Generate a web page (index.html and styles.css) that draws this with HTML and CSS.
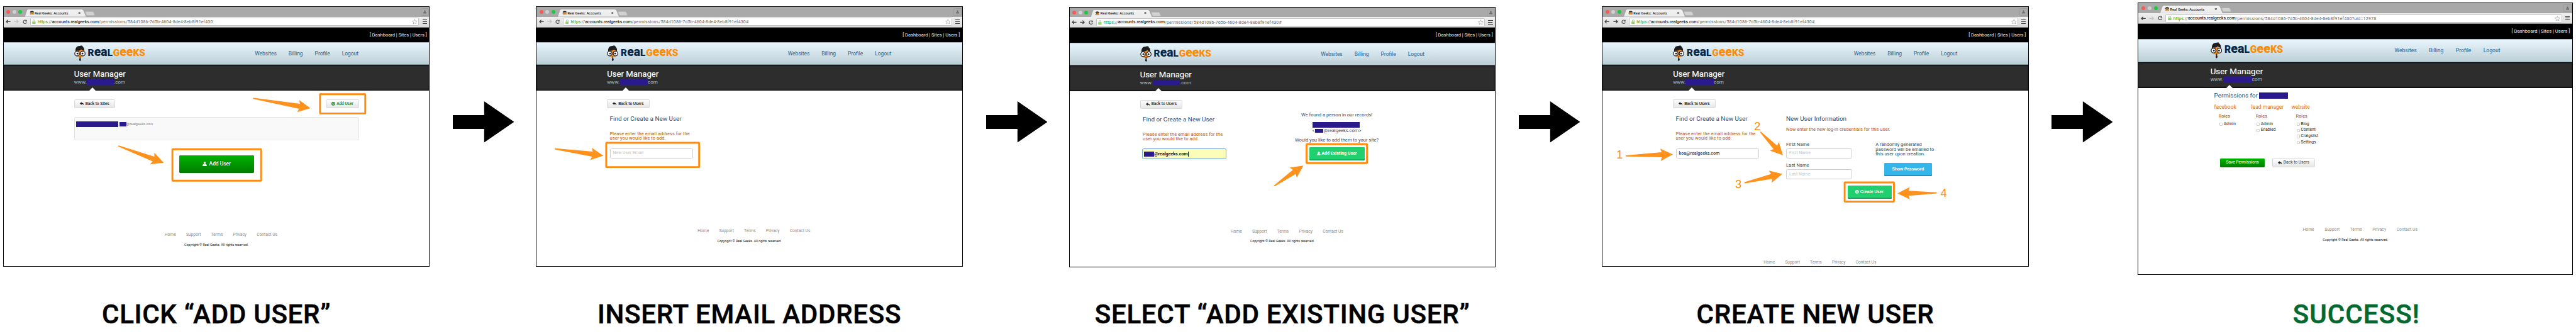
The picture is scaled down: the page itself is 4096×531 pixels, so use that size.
FILE: index.html
```html
<!DOCTYPE html>
<html lang="en">
<head>
<meta charset="utf-8">
<title>User Manager walkthrough</title>
<link rel="stylesheet" href="styles.css">
</head>
<body>
<svg class="sprite" aria-hidden="true">
  <defs>
    <symbol id="geek" viewBox="0 0 25 35">
      <path d="M4 10h17v9c0 4-4 8-8.500 8S4 23 4 19z" fill="#f7901e"/>
      <path d="M3 14C1.500 6 6 1.500 12 1.500c1.500-.5 4-.5 5.500-1l-.7 1.300 2.200-.3-1 1.200c3.500 2 5 6 3.600 11.300l-1.800-3c-2 .3-3-.6-4-1.800-3 2.300-6.500 3.200-10.300 2.300z" fill="#1d1d20"/>
      <path d="M4 14.500q4-2 7 .5M14 15q3-2.500 7-.5" stroke="#1d1d20" stroke-width="1.600" fill="none"/>
      <circle cx="6.200" cy="18" r="5" fill="#fff" stroke="#1d1d20" stroke-width="1.700"/>
      <circle cx="18.800" cy="18" r="5" fill="#fff" stroke="#1d1d20" stroke-width="1.700"/>
      <circle cx="7" cy="18" r="1.900" fill="#1d1d20"/><circle cx="18" cy="18" r="1.900" fill="#1d1d20"/>
      <path d="M11.300 24.500h3l-.8 2 1.500 5.300-2.200 3-2.200-3 1.500-5.300z" fill="#1d1d20"/>
    </symbol>
    <symbol id="favicon" viewBox="0 0 10 9">
      <path d="M1.500 8.500C-.5 7 .8 5.500 2 5.500h6c1.200 0 2.500 1.500.5 3z" fill="#8a9096"/>
      <path d="M2 3h6v3c0 1.500-1.500 2.500-3 2.500S2 7.500 2 6z" fill="#f0962c"/>
      <path d="M.8 4.500C.5 1.500 2.500.3 5 .3s4.600 1 4.200 4.200L7.500 3.200 2.500 3.500z" fill="#222"/>
      <path d="M2.600 5.300h1.800M5.600 5.300h1.800" stroke="#222" stroke-width="1"/>
    </symbol>
    <symbol id="left" viewBox="0 0 11 9"><path d="M10.500 4.500H1.500M5 .8L1.300 4.500 5 8.200" fill="none" stroke="currentColor" stroke-width="1.700"/></symbol>
    <symbol id="right" viewBox="0 0 11 9"><path d="M.5 4.500h9M6 .8l3.700 3.700L6 8.200" fill="none" stroke="currentColor" stroke-width="1.700"/></symbol>
    <symbol id="reload" viewBox="0 0 10 10"><path d="M7.600 2.300A3.700 3.700 0 1 0 8.600 6.300" fill="none" stroke="#4a4a4a" stroke-width="1.600"/><path d="M9.200.5v4H5.300z" fill="#4a4a4a"/></symbol>
    <symbol id="lock" viewBox="0 0 8 10"><path d="M1.800 5V3a2.200 2.200 0 0 1 4.400 0v2" fill="none" stroke="#a9b6a3" stroke-width="1.200"/><rect x=".3" y="4.300" width="7.400" height="5.400" rx=".6" fill="#8fd46a"/></symbol>
    <symbol id="star" viewBox="0 0 12 12"><path d="M6 .9l1.500 3.500 3.800.3-2.900 2.500.9 3.800L6 9l-3.300 2 .9-3.800L.7 4.700l3.800-.3z" fill="#fff" stroke="#8f8f8f" stroke-width=".8"/></symbol>
    <symbol id="person" viewBox="0 0 9 9"><circle cx="4.500" cy="2.400" r="2.300" fill="currentColor"/><path d="M.2 8.900V7.200C.2 5.300 1.800 4.700 3 4.500q1.500.8 3 0c1.200.2 2.800.8 2.800 2.700v1.700z" fill="currentColor"/></symbol>
    <symbol id="reply" viewBox="0 0 9 8"><path d="M3.700 0v2.100C7 2.200 8.900 3.600 8.600 7.600 7.900 5.700 6.600 4.800 3.700 4.800V7L0 3.500z" fill="#222"/></symbol>
    <symbol id="plus" viewBox="0 0 8 8"><circle cx="4" cy="4" r="3.100" fill="none" stroke="currentColor" stroke-width="1.500"/><path d="M4 2.200v3.600M2.200 4h3.600" stroke="currentColor" stroke-width="1"/></symbol>
    <symbol id="next" viewBox="0 0 134 90"><path d="M0 30h68.500V0L134 45 68.500 90V60.500H0z" fill="#000"/></symbol>
  </defs>
</svg>

<main class="board">

  <section class="step">
    <div class="browser">
      <div class="strip">
        <i class="light red"></i><i class="light grey"></i><i class="light green"></i>
        <div class="tab"><svg class="fav"><use href="#favicon"/></svg><span>Real Geeks: Accounts</span><b>×</b></div><i class="newtab"></i>
        <div class="profile"><svg><use href="#person"/></svg></div>
      </div>
      <div class="toolbar">
        <svg class="nav-icon"><use href="#left"/></svg><svg class="nav-icon off"><use href="#right"/></svg><svg class="nav-icon reload"><use href="#reload"/></svg>
        <div class="address"><svg class="lock"><use href="#lock"/></svg><span class="secure">https</span><span>://</span><span class="host">accounts.realgeeks.com</span><span class="path">/permissions/584d1086-7d5b-4604-8de4-8eb8f91ef430</span><svg class="star"><use href="#star"/></svg></div>
        <i class="burger"></i>
      </div>
      <div class="topbar">[ Dashboard | Sites | Users ]</div>
      <header class="brand">
        <div class="logo"><svg><use href="#geek"/></svg><span class="real">R<em>ea</em>L</span><span class="geeks">G<em>ee</em>KS</span></div>
        <nav><a>Websites</a><a>Billing</a><a>Profile</a><a>Logout</a></nav>
      </header>
      <div class="title"><h1>User Manager</h1><p>www.<i class="redact site"></i>.com</p></div>
      <div class="page">
        <div class="bar"><a class="btn back sites"><svg><use href="#reply"/></svg>Back to Sites</a><a class="btn add"><svg><use href="#plus"/></svg>Add User</a></div>
        <div class="userbox"><i class="redact name"></i><i class="redact mail"></i>@realgeeks.com</div>
        <a class="big"><svg><use href="#person"/></svg>Add User</a>
        <footer class="foot f1"><nav><a>Home</a><a>Support</a><a>Terms</a><a>Privacy</a><a>Contact Us</a></nav><p>Copyright © Real Geeks. All rights reserved.</p></footer>
      </div>
      <svg class="callouts" viewBox="0 0 930 567">
        <rect x="368.800" y="311.500" width="193.300" height="68.500" rx="1"/>
        <rect x="690.500" y="191.500" width="98.600" height="42" rx="1"/>
        <path transform="translate(350 341) rotate(20.400)" d="M0 0L-27-13.500-24-5.500-105-1.300Q-107 0-105 1.300L-24 5.500-27 13.500z"/>
        <path transform="translate(669.500 222) rotate(9.800)" d="M0 0L-27-13.500-24-5.500-126-1.300Q-128 0-126 1.300L-24 5.500-27 13.500z"/>
      </svg>
    </div>
    <h2>CLICK “ADD USER”</h2>
  </section>

  <svg class="next"><use href="#next"/></svg>

  <section class="step">
    <div class="browser">
      <div class="strip">
        <i class="light red"></i><i class="light grey"></i><i class="light green"></i>
        <div class="tab"><svg class="fav"><use href="#favicon"/></svg><span>Real Geeks: Accounts</span><b>×</b></div><i class="newtab"></i>
        <div class="profile"><svg><use href="#person"/></svg></div>
      </div>
      <div class="toolbar">
        <svg class="nav-icon"><use href="#left"/></svg><svg class="nav-icon off"><use href="#right"/></svg><svg class="nav-icon reload"><use href="#reload"/></svg>
        <div class="address"><svg class="lock"><use href="#lock"/></svg><span class="secure">https</span><span>://</span><span class="host">accounts.realgeeks.com</span><span class="path">/permissions/584d1086-7d5b-4604-8de4-8eb8f91ef430#</span><svg class="star"><use href="#star"/></svg></div>
        <i class="burger"></i>
      </div>
      <div class="topbar">[ Dashboard | Sites | Users ]</div>
      <header class="brand">
        <div class="logo"><svg><use href="#geek"/></svg><span class="real">R<em>ea</em>L</span><span class="geeks">G<em>ee</em>KS</span></div>
        <nav><a>Websites</a><a>Billing</a><a>Profile</a><a>Logout</a></nav>
      </header>
      <div class="title"><h1>User Manager</h1><p>www.<i class="redact site wide"></i>com</p></div>
      <div class="page">
        <div class="bar"><a class="btn back"><svg><use href="#reply"/></svg>Back to Users</a></div>
        <div class="columns">
          <div class="find"><h3>Find or Create a New User</h3><p class="hint">Please enter the email address for the<br>user you would like to add.</p><div class="input"><span>New User Email</span></div></div>
        </div>
        <footer class="foot f2"><nav><a>Home</a><a>Support</a><a>Terms</a><a>Privacy</a><a>Contact Us</a></nav><p>Copyright © Real Geeks. All rights reserved.</p></footer>
      </div>
      <svg class="callouts" viewBox="0 0 930 567">
        <rect x="152" y="297.300" width="202.500" height="53" rx="1"/>
        <path transform="translate(145.700 325.500) rotate(8)" d="M0 0L-27-13.500-24-5.500-106-1.300Q-108 0-106 1.300L-24 5.500-27 13.500z"/>
      </svg>
    </div>
    <h2>INSERT EMAIL ADDRESS</h2>
  </section>

  <svg class="next"><use href="#next"/></svg>

  <section class="step third">
    <div class="browser">
      <div class="strip">
        <i class="light red"></i><i class="light grey"></i><i class="light green"></i>
        <div class="tab"><svg class="fav"><use href="#favicon"/></svg><span>Real Geeks: Accounts</span><b>×</b></div><i class="newtab"></i>
        <div class="profile"><svg><use href="#person"/></svg></div>
      </div>
      <div class="toolbar">
        <svg class="nav-icon"><use href="#left"/></svg><svg class="nav-icon"><use href="#right"/></svg><svg class="nav-icon reload"><use href="#reload"/></svg>
        <div class="address"><svg class="lock"><use href="#lock"/></svg><span class="secure">https</span><span>://</span><span class="host">accounts.realgeeks.com</span><span class="path">/permissions/584d1086-7d5b-4604-8de4-8eb8f91ef430#</span><svg class="star"><use href="#star"/></svg></div>
        <i class="burger"></i>
      </div>
      <div class="topbar">[ Dashboard | Sites | Users ]</div>
      <header class="brand">
        <div class="logo"><svg><use href="#geek"/></svg><span class="real">R<em>ea</em>L</span><span class="geeks">G<em>ee</em>KS</span></div>
        <nav><a>Websites</a><a>Billing</a><a>Profile</a><a>Logout</a></nav>
      </header>
      <div class="title"><h1>User Manager</h1><p>www.<i class="redact site"></i>.com</p></div>
      <div class="page">
        <div class="bar"><a class="btn back"><svg><use href="#reply"/></svg>Back to Users</a></div>
        <div class="columns">
          <div class="find"><h3>Find or Create a New User</h3><p class="hint">Please enter the email address for the<br>user you would like to add.</p><div class="input focused"><i class="redact"></i><b>@realgeeks.com</b><i class="caret"></i></div></div>
          <div class="found"><p>We found a person in our records!</p><i class="redact person"></i><p class="addr">&lt;<i class="redact"></i>@realgeeks.com&gt;</p><p>Would you like to add them to your site?</p><a class="flat existing"><svg><use href="#person"/></svg>Add Existing User</a></div>
        </div>
        <footer class="foot f2"><nav><a>Home</a><a>Support</a><a>Terms</a><a>Privacy</a><a>Contact Us</a></nav><p>Copyright © Real Geeks. All rights reserved.</p></footer>
      </div>
      <svg class="callouts" viewBox="0 0 930 567">
        <rect x="517.300" y="299.200" width="131.800" height="41" rx="1"/>
        <path transform="translate(510.400 345.700) rotate(-34.900)" d="M0 0L-27-13.500-24-5.500-77-1.300Q-79 0-77 1.300L-24 5.500-27 13.500z"/>
      </svg>
    </div>
    <h2>SELECT “ADD EXISTING USER”</h2>
  </section>

  <svg class="next"><use href="#next"/></svg>

  <section class="step">
    <div class="browser">
      <div class="strip">
        <i class="light red"></i><i class="light grey"></i><i class="light green"></i>
        <div class="tab"><svg class="fav"><use href="#favicon"/></svg><span>Real Geeks: Accounts</span><b>×</b></div><i class="newtab"></i>
        <div class="profile"><svg><use href="#person"/></svg></div>
      </div>
      <div class="toolbar">
        <svg class="nav-icon"><use href="#left"/></svg><svg class="nav-icon"><use href="#right"/></svg><svg class="nav-icon reload"><use href="#reload"/></svg>
        <div class="address"><svg class="lock"><use href="#lock"/></svg><span class="secure">https</span><span>://</span><span class="host">accounts.realgeeks.com</span><span class="path">/permissions/584d1086-7d5b-4604-8de4-8eb8f91ef430#</span><svg class="star"><use href="#star"/></svg></div>
        <i class="burger"></i>
      </div>
      <div class="topbar">[ Dashboard | Sites | Users ]</div>
      <header class="brand">
        <div class="logo"><svg><use href="#geek"/></svg><span class="real">R<em>ea</em>L</span><span class="geeks">G<em>ee</em>KS</span></div>
        <nav><a>Websites</a><a>Billing</a><a>Profile</a><a>Logout</a></nav>
      </header>
      <div class="title"><h1>User Manager</h1><p>www.<i class="redact site wide"></i>com</p></div>
      <div class="page">
        <div class="bar"><a class="btn back"><svg><use href="#reply"/></svg>Back to Users</a></div>
        <div class="columns">
          <div class="find"><h3>Find or Create a New User</h3><p class="hint">Please enter the email address for the<br>user you would like to add.</p><div class="input filled"><span>koa@realgeeks.com</span></div></div>
          <div class="info">
            <h3>New User Information</h3>
            <p class="hint">Now enter the new log-in credentials for this user.</p>
            <div class="split">
              <div class="fields"><label>First Name</label><div class="input"><span>First Name</span></div><label>Last Name</label><div class="input"><span>Last Name</span></div></div>
              <div class="password"><p>A randomly generated<br>password will be emailed to<br>this user upon creation.</p><a class="flat show">Show Password</a></div>
            </div>
            <a class="flat create"><svg><use href="#plus"/></svg>Create User</a>
          </div>
        </div>
        <footer class="foot f4"><nav><a>Home</a><a>Support</a><a>Terms</a><a>Privacy</a><a>Contact Us</a></nav></footer>
      </div>
      <svg class="callouts" viewBox="0 0 930 567">
        <rect x="529.100" y="383.600" width="107.400" height="42" rx="1"/>
        <path transform="translate(154.700 322.600) rotate(-1.900)" d="M0 0L-27-13.500-24-5.500-102-1.300Q-104 0-102 1.300L-24 5.500-27 13.500z"/>
        <path transform="translate(394.700 324.600) rotate(46)" d="M0 0L-27-13.500-24-5.500-70-1.300Q-72 0-70 1.300L-24 5.500-27 13.500z"/>
        <path transform="translate(393.400 365.100) rotate(-13.300)" d="M0 0L-27-13.500-24-5.500-84-1.300Q-86 0-84 1.300L-24 5.500-27 13.500z"/>
        <path transform="translate(644.200 407.600) rotate(179.300)" d="M0 0L-27-13.500-24-5.500-85-1.300Q-87 0-85 1.300L-24 5.500-27 13.500z"/>
        <text x="32" y="332.200">1</text><text x="332" y="269.600">2</text><text x="290.500" y="395.600">3</text><text x="738" y="415.600">4</text>
      </svg>
    </div>
    <h2>CREATE NEW USER</h2>
  </section>

  <svg class="next last"><use href="#next"/></svg>

  <section class="step fifth">
    <div class="browser">
      <div class="strip">
        <i class="light red"></i><i class="light grey"></i><i class="light green"></i>
        <div class="tab"><svg class="fav"><use href="#favicon"/></svg><span>Real Geeks: Accounts</span><b>×</b></div><i class="newtab"></i>
        <div class="profile"><svg><use href="#person"/></svg></div>
      </div>
      <div class="toolbar">
        <svg class="nav-icon"><use href="#left"/></svg><svg class="nav-icon off"><use href="#right"/></svg><svg class="nav-icon reload"><use href="#reload"/></svg>
        <div class="address"><svg class="lock"><use href="#lock"/></svg><span class="secure">https</span><span>://</span><span class="host">accounts.realgeeks.com</span><span class="path">/permissions/584d1086-7d5b-4604-8de4-8eb8f91ef430?uid=12978</span><svg class="star"><use href="#star"/></svg></div>
        <i class="burger"></i>
      </div>
      <div class="topbar">[ Dashboard | Sites | Users ]</div>
      <header class="brand">
        <div class="logo"><svg><use href="#geek"/></svg><span class="real">R<em>ea</em>L</span><span class="geeks">G<em>ee</em>KS</span></div>
        <nav><a>Websites</a><a>Billing</a><a>Profile</a><a>Logout</a></nav>
      </header>
      <div class="title"><h1>User Manager</h1><p>www.<i class="redact site wide"></i>com</p></div>
      <div class="page perms">
        <h3>Permissions for <i class="redact"></i></h3>
        <div class="roles">
          <div><h4>facebook</h4><h5>Roles</h5><label><i></i>Admin</label></div>
          <div><h4>lead manager</h4><h5>Roles</h5><label><i></i>Admin</label><label><i></i>Enabled</label></div>
          <div><h4>website</h4><h5>Roles</h5><label><i></i>Blog</label><label><i></i>Content</label><label><i></i>Craigslist</label><label><i></i>Settings</label></div>
        </div>
        <div class="actions"><a class="save">Save Permissions</a><a class="btn back"><svg><use href="#reply"/></svg>Back to Users</a></div>
        <footer class="foot f5"><nav><a>Home</a><a>Support</a><a>Terms</a><a>Privacy</a><a>Contact Us</a></nav><p>Copyright © Real Geeks. All rights reserved.</p></footer>
      </div>
    </div>
    <h2 class="success">SUCCESS!</h2>
  </section>
</main>
</body>
</html>
```
FILE: styles.css
```css
* { box-sizing: border-box; margin: 0; padding: 0; }
body { background: #fff; overflow: hidden; }
i, em { font-style: normal; }
svg { display: block; flex: none; }
.sprite { position: absolute; width: 0; height: 0; }

.board {
  zoom: 0.72973;
  width: 5613px; height: 727px;
  padding-left: 6.5px;
  display: flex; align-items: flex-start;
  font-family: Roboto, "Liberation Sans", sans-serif;
  white-space: nowrap; color: #000;
}
.step { flex: none; width: 930px; height: 727px; padding: 13.4px 0 12.2px; display: flex; flex-direction: column; justify-content: space-between; }
.step.third { padding-top: 14.4px; }
.step.fifth { width: 948px; padding-top: 5px; }
.step.fifth .browser { zoom: 1.019; height: 582.500px; }
.next { width: 133.600px; height: 90px; margin: 221px 47px 0 50.800px; }
.next.last { margin: 221px 55px 0 49.400px; }
h2 { font-size: 57.700px; font-weight: 500; line-height: 60px; letter-spacing: 0.950px; text-align: center; -webkit-text-stroke: 0.700px currentColor; }
h2.success { color: #04692f; letter-spacing: 1.400px; padding-left: 4px; }

.browser { position: relative; width: 930px; height: 567.500px; border: 1px solid #000; background: #fff; display: flex; flex-direction: column; }

/* window chrome */
.strip { height: 21.700px; background: #a9a9a9; display: flex; align-items: flex-end; padding-left: 6.500px; }
.light { width: 8px; height: 8px; border-radius: 50%; margin: 0 5px 6.500px 0; flex: none; }
.red { background: #fb5a54; } .grey { background: #d0d0d0; } .green { background: #1fc83b; }
.tab { width: 133px; height: 16px; margin-left: 1px; padding: 0 14px; background: linear-gradient(#f1f1f1, #ececec); clip-path: polygon(0 100%, 5px 12%, 7px 0, 124px 0, 127px 12%, 100% 100%); display: flex; align-items: center; color: #222; }
.tab .fav { width: 10.500px; height: 9px; margin: 0 1px 0 -4.500px; }
.tab span { font-size: 7.540px; font-weight: 500; }
.tab b { margin-left: auto; margin-right: -2px; font-size: 9px; font-weight: 500; color: #444; }
.newtab { width: 19px; height: 9px; margin: 0 0 3px -1px; background: #d2d2d2; border: 1px solid #b9b9b9; border-radius: 3px; transform: skewX(20deg); }
.profile { width: 17.500px; height: 17px; margin: 0 1px 1.800px auto; border: 1px solid #9c9c9c; border-radius: 2px; color: #6b6b6b; display: grid; place-items: center; }
.profile svg { width: 7px; height: 8px; }
.toolbar { height: 23.500px; background: linear-gradient(#efefef, #dcdcdc); border-bottom: 1px solid #8a8a8a; display: flex; align-items: center; padding-left: 4.500px; color: #3f3f3f; }
.nav-icon { width: 11px; height: 9px; margin-right: 7px; }
.nav-icon.off { color: #c4c4c4; }
.nav-icon.reload { width: 10px; height: 10px; margin-right: 6.500px; margin-left: 0.500px; }
.address { width: 848px; height: 17.500px; border: 1px solid #c4c4c4; border-radius: 2px; background: #fff; display: flex; align-items: center; padding: 0 4px 0 3.500px; font-size: 9.640px; color: #666; }
.lock { width: 8px; height: 10px; margin-right: 4px; }
.secure { color: #0a9a1c; }
.host { color: #111; font-size: 9.350px; -webkit-text-stroke: 0.150px #111; }
.path { letter-spacing: 0.200px; }
.star { width: 12px; height: 12px; margin-left: auto; margin-right: -2px; }
.burger { width: 10px; height: 9px; margin-left: 7px; border-top: 2px solid #333; border-bottom: 2px solid #333; background: linear-gradient(#333, #333) center / 10px 2px no-repeat; }

/* site header */
.topbar { height: 32px; line-height: 32px; background: #000; color: #f3f3f3; font-size: 10.330px; text-align: right; padding-right: 5px; }
.brand { height: 49.500px; background: linear-gradient(#e9f5fd, #bccfd6); border-top: 1px solid #a8b2b6; border-bottom: 1px solid #7f9ea2; display: flex; align-items: center; justify-content: space-between; padding: 0 154px 1px 153.500px; }
.logo { display: flex; align-items: center; }
.logo svg { width: 25px; height: 35px; margin-right: 5px; }
.logo span { font-size: 21px; font-weight: 900; line-height: 24px; height: 24px; color: #08284a; }
.logo em { font-size: 26.500px; line-height: 1px; }
.logo .real { width: 55px; letter-spacing: 0.100px; }
.logo .geeks { color: #fd8b05; letter-spacing: 0.100px; }
.brand nav { display: flex; gap: 26px; font-size: 11.580px; color: #2b628f; }
.title { position: relative; height: 56px; background: #2d2d2d; border-top: 1px solid #000; border-bottom: 1px solid #000; box-shadow: inset 0 0 3px #111; padding: 10px 0 0 153.500px; }
.title::after { content: ""; position: absolute; left: 187px; bottom: -1px; border: 7px solid transparent; border-top: 0; border-bottom-color: #fff; }
h1 { font-size: 18.070px; font-weight: 400; line-height: 20px; color: #fff; -webkit-text-stroke: 0.200px #fff; }
.title p { display: flex; align-items: center; font-size: 11.100px; line-height: 13px; color: #a4bccf; }
.redact { display: inline-block; flex: none; background: #2a1a8e; }
.site { width: 59.500px; height: 12.500px; }
.site.wide { width: 61.500px; }

/* page body */
.page { flex: 1; display: flex; flex-direction: column; padding: 19.500px 0 0 153.500px; color: #2c4a6c; font-size: 10.360px; line-height: 10.500px; }
.bar { width: 621px; display: flex; justify-content: space-between; }
.btn { height: 19.500px; width: 92.700px; border: 1px solid #dadada; border-radius: 2px; background: linear-gradient(#fdfdfd, #e6e6e6); display: flex; align-items: center; justify-content: center; gap: 3px; font-size: 9px; font-weight: 500; color: #222; }
.btn svg { width: 9px; height: 8px; }
.btn.sites { width: 89.500px; }
.btn.add { width: 72.500px; color: #0b7a12; font-size: 8.900px; }
.btn.add svg { width: 8px; height: 8px; }
.userbox { width: 621px; height: 50.500px; margin-top: 19px; border: 1px solid #e4e4e4; border-radius: 3px; background: #f9f9f9; display: flex; align-items: center; padding: 0 3px 20px; font: 7.710px "Liberation Sans", sans-serif; color: #7d7d7d; }
.redact.name { width: 92.500px; height: 12.500px; margin-right: 1.500px; }
.redact.mail { width: 15.500px; height: 10px; }
.big { width: 163px; height: 39px; margin: 32.500px 0 0 229px; border-radius: 2px; background: linear-gradient(#00b400, #007c00); color: #fff; font-size: 11.520px; font-weight: 500; display: flex; align-items: center; justify-content: center; gap: 5.500px; text-shadow: 0 -1px 1px #0006; }
.big svg { width: 9.500px; height: 10px; }
.columns { display: flex; }
.find { width: 182px; margin-left: 6px; }
h3 { font-size: 13.560px; font-weight: 400; line-height: 16px; margin-top: 15px; color: #2a4a73; }
.hint { color: #b25a14; margin-top: 18.800px; }
.input { height: 22px; margin-top: 16.500px; border: 1.500px solid #cfcfcf; border-radius: 3.500px; display: flex; align-items: center; padding-left: 5.500px; font-size: 9.470px; color: #c6c6c6; }
.input.filled { color: #33414f; font-size: 9.740px; font-weight: 500; }
.input.focused { background: #fbfdb9; border: 1.500px solid #74a5dc; height: 23.500px; margin: 15.500px 0 0 -1px; padding-left: 2.500px; color: #111; font-size: 9.730px; }
.focused .redact { width: 22px; height: 11.500px; }
.caret { width: 1px; height: 11px; background: #000; }
.found { width: 200px; margin: 7.500px 0 0 140.800px; display: flex; flex-direction: column; align-items: center; }
.redact.person { width: 103px; height: 12.700px; margin: 10.500px 2.500px 1px 0; }
.addr { display: flex; align-items: center; margin-bottom: 10px; }
.addr .redact { width: 19px; height: 9px; }
.flat { height: 29px; border-radius: 2px; background: #20cf6e; box-shadow: inset 0 -2px #139a4d; color: #fff; display: flex; align-items: center; justify-content: center; font-weight: 700; font-size: 9.680px; gap: 2.500px; padding-bottom: 1px; }
.flat svg { width: 8px; height: 8px; }
.existing { width: 120.500px; margin-top: 10px; }
.info { margin-left: 58.500px; width: 340px; }
.info .hint { margin-top: 8.800px; }
.split { display: flex; margin-top: 23px; }
.fields { width: 144.300px; margin-right: 50.500px; }
.fields label { display: block; }
.fields .input { margin: 3.500px 0 9.500px; }
.show { width: 103.700px; margin: 13.500px 0 0 19px; background: #35b6ea; box-shadow: inset 0 -2px #1a87b8; font-family: "Liberation Sans", sans-serif; font-size: 9.090px; }
.create { width: 96px; margin: 3.300px 0 0 133.600px; font-family: "Liberation Sans", sans-serif; font-size: 9.140px; }

.foot { margin: auto 0 0 -153.500px; font-size: 9.140px; line-height: 12px; color: #8c8c8c; }
.foot nav { display: flex; justify-content: center; gap: 22.200px; padding-left: 20px; }
.foot p { margin-top: 9.700px; text-align: center; font-size: 7.270px; color: #111; }
.f1 { padding-bottom: 40px; }
.f2 { padding-bottom: 48.500px; }
.f4 { padding-bottom: 1px; }
.f5 { padding-bottom: 67px; margin-left: -161.500px; }

/* permissions screen */
.perms { padding: 7.500px 0 0 161.500px; }
.perms h3 { margin: 0; font-size: 13.300px; display: flex; align-items: center; }
.perms h3 .redact { width: 61.500px; height: 12.800px; margin-left: 3px; }
.roles { display: grid; grid-template-columns: 79.400px 85.800px 90px; margin-top: 9.500px; height: 117px; }
h4 { font-size: 11.450px; font-weight: 400; line-height: 14px; color: #d96f16; }
h5 { font-size: 9.950px; font-weight: 400; line-height: 12px; margin: 7.500px 0 4px 9.700px; color: #8f4a14; }
.roles label { display: flex; align-items: center; height: 13px; margin-left: 11px; font-size: 8.900px; color: #222; }
.roles label i { width: 7.500px; height: 7.500px; margin-right: 2px; border: 1px solid #cbcbcb; border-radius: 1.500px; }
.actions { display: flex; gap: 15px; margin-left: 12.500px; }
.actions .btn { width: 92.300px; font-weight: 400; color: #333; height: 19.300px; }
.save { width: 96.300px; height: 19.300px; border-radius: 2px; background: linear-gradient(#00b400, #007c00); color: #fff; font-size: 8.850px; display: grid; place-items: center; }

.callouts { position: absolute; left: -1px; top: -1px; width: 930px; height: 567px; overflow: visible; }
.callouts rect { fill: none; stroke: #fe8c0e; stroke-width: 4; }
.callouts path { fill: #fe921c; }
.callouts text { font: 25px "Liberation Sans", sans-serif; fill: #fe8c0e; }
```
